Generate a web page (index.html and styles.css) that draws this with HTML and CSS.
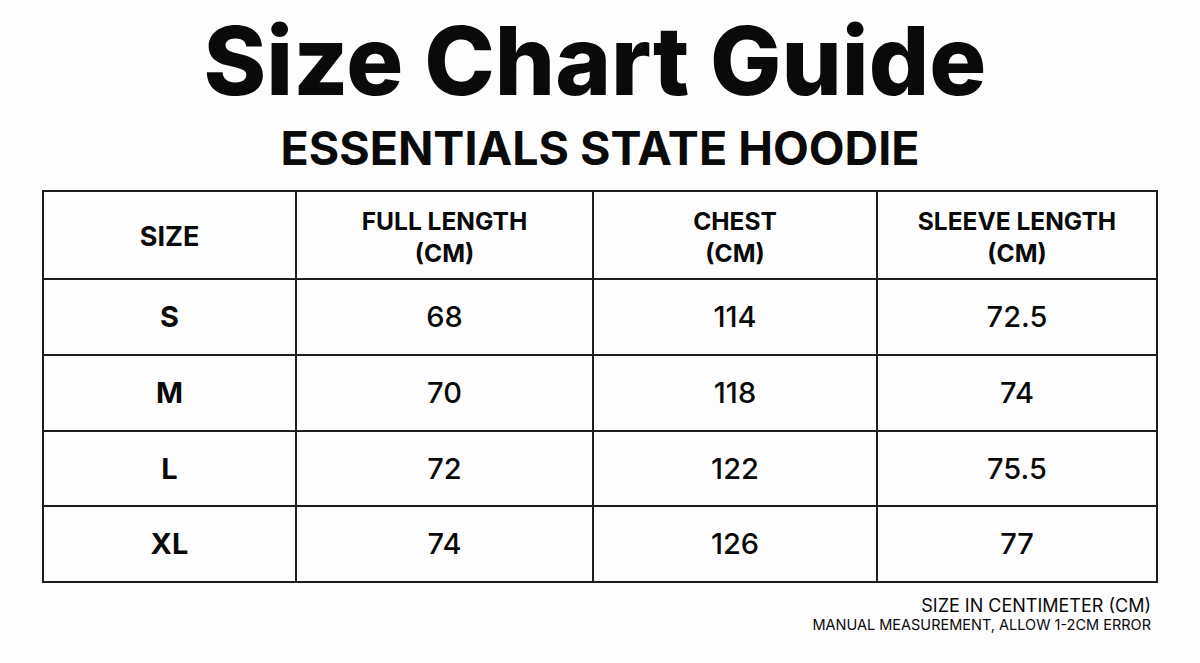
FILE: index.html
```html
<!DOCTYPE html>
<html lang="en">
<head>
<meta charset="utf-8">
<title>Size Chart Guide</title>
<link rel="stylesheet" href="styles.css">
</head>
<body>
<main class="page">
  <h1 class="title">Size Chart Guide</h1>
  <h2 class="subtitle">ESSENTIALS STATE HOODIE</h2>
  <table class="chart">
    <colgroup>
      <col class="c1"><col class="c2"><col class="c3"><col class="c4">
    </colgroup>
    <thead>
      <tr>
        <th class="size-head">SIZE</th>
        <th>FULL LENGTH<br>(CM)</th>
        <th>CHEST<br>(CM)</th>
        <th>SLEEVE LENGTH<br>(CM)</th>
      </tr>
    </thead>
    <tbody>
      <tr><td class="size">S</td><td>68</td><td>114</td><td>72.5</td></tr>
      <tr><td class="size">M</td><td>70</td><td>118</td><td>74</td></tr>
      <tr class="r3"><td class="size">L</td><td>72</td><td>122</td><td>75.5</td></tr>
      <tr><td class="size">XL</td><td>74</td><td>126</td><td>77</td></tr>
    </tbody>
  </table>
  <div class="notes">
    <p class="note-main">SIZE IN CENTIMETER (CM)</p>
    <p class="note-sub">MANUAL MEASUREMENT, ALLOW 1-2CM ERROR</p>
  </div>
</main>
</body>
</html>
```

FILE: styles.css
```css
html, body {
  margin: 0;
  padding: 0;
  background: #fdfdfd;
}

body {
  font-family: Inter, "Liberation Sans", sans-serif;
  color: #0a0a0a;
}

.page {
  width: 1114px;
  margin: 0 auto;
  padding-top: 13px;
  display: flex;
  flex-direction: column;
  align-items: center;
}

.title {
  margin: 0;
  font-size: 95px;
  line-height: 1;
  font-weight: 800;
  letter-spacing: 0;
  transform: translateX(-5px);
}

.subtitle {
  margin: 17px 0 0;
  font-size: 46.5px;
  line-height: 1;
  font-weight: 700;
  letter-spacing: 0;
}

.chart {
  margin-top: 18px;
  width: 1114px;
  border-collapse: collapse;
  table-layout: fixed;
  border: 2px solid #1e1e1e;
}

.c1 { width: 253px; }
.c2 { width: 297px; }
.c3 { width: 284px; }
.c4 { width: 280px; }

.chart th,
.chart td {
  border: 2px solid #1e1e1e;
  text-align: center;
  vertical-align: middle;
  padding: 0;
}

.chart th {
  height: 82px;
  padding-top: 4px;
  font-size: 24.5px;
  line-height: 32px;
  font-weight: 700;
  letter-spacing: 0;
}

.chart th.size-head {
  font-size: 27px;
}

.chart td {
  height: 74px;
  font-size: 29px;
  font-weight: 500;
}

.chart .r3 td {
  height: 73px;
}

.chart td.size {
  font-weight: 700;
}

.notes {
  align-self: flex-end;
  margin-right: 6px;
  text-align: right;
  padding-top: 12px;
}

.notes p {
  margin: 0;
}

.note-main {
  font-size: 18px;
  line-height: 21px;
  font-weight: 400;
}

.note-sub {
  font-size: 14.5px;
  line-height: 18px;
  font-weight: 400;
}
```
